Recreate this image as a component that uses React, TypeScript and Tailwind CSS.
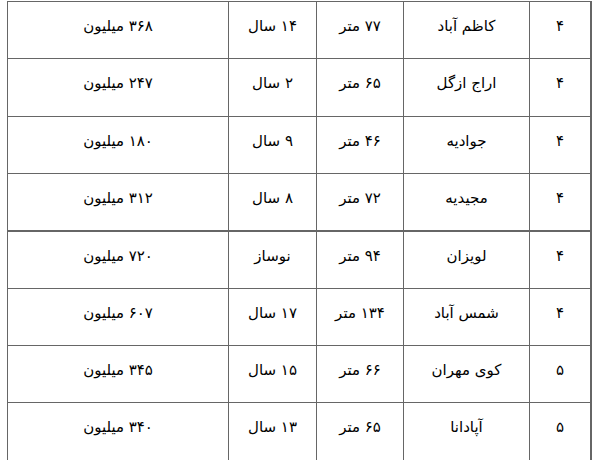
import React from "react";

type Row = { n: string; name: string; area: string; age: string; price: string; h: string; bb: string };

const rows: Row[] = [
  { n: "۴", name: "کاظم آباد", area: "۷۷ متر", age: "۱۴ سال", price: "۳۶۸ میلیون", h: "h-[57px]", bb: "border-b" },
  { n: "۴", name: "اراج ازگل", area: "۶۵ متر", age: "۲ سال", price: "۲۴۷ میلیون", h: "h-[58px]", bb: "border-b" },
  { n: "۴", name: "جوادیه", area: "۴۶ متر", age: "۹ سال", price: "۱۸۰ میلیون", h: "h-[57px]", bb: "border-b" },
  { n: "۴", name: "مجیدیه", area: "۷۲ متر", age: "۸ سال", price: "۳۱۲ میلیون", h: "h-[58px]", bb: "border-b-2" },
  { n: "۴", name: "لویزان", area: "۹۴ متر", age: "نوساز", price: "۷۲۰ میلیون", h: "h-[57px]", bb: "border-b" },
  { n: "۴", name: "شمس آباد", area: "۱۳۴ متر", age: "۱۷ سال", price: "۶۰۷ میلیون", h: "h-[57px]", bb: "border-b" },
  { n: "۵", name: "کوی مهران", area: "۶۶ متر", age: "۱۵ سال", price: "۳۴۵ میلیون", h: "h-[57px]", bb: "border-b" },
  { n: "۵", name: "آپادانا", area: "۶۵ متر", age: "۱۳ سال", price: "۳۴۰ میلیون", h: "h-[58px]", bb: "border-b" },
];

function Cell({ w, children }: { w: string; children: React.ReactNode }) {
  return (
    <div className={`${w} shrink-0 border-l border-[#666666] flex justify-center pt-[12px] leading-[24px]`}>
      {children}
    </div>
  );
}

export default function App() {
  return (
    <div className="w-[599px] h-[460px] overflow-hidden bg-white pt-[1px]">
      <div
        dir="rtl"
        className="ml-[7px] w-[585px] border-t border-r-2 border-[#666666] text-black text-[15px]"
        style={{ fontFamily: '"DejaVu Sans", Tahoma, sans-serif' }}
      >
        {rows.map((r, i) => (
          <div key={i} className={`flex ${r.h} ${r.bb} border-[#666666]`}>
            <Cell w="w-[61px]">{r.n}</Cell>
            <Cell w="w-[126px]">{r.name}</Cell>
            <Cell w="w-[87px]">{r.area}</Cell>
            <Cell w="w-[88px]">{r.age}</Cell>
            <Cell w="w-[221px]">{r.price}</Cell>
          </div>
        ))}
      </div>
    </div>
  );
}
